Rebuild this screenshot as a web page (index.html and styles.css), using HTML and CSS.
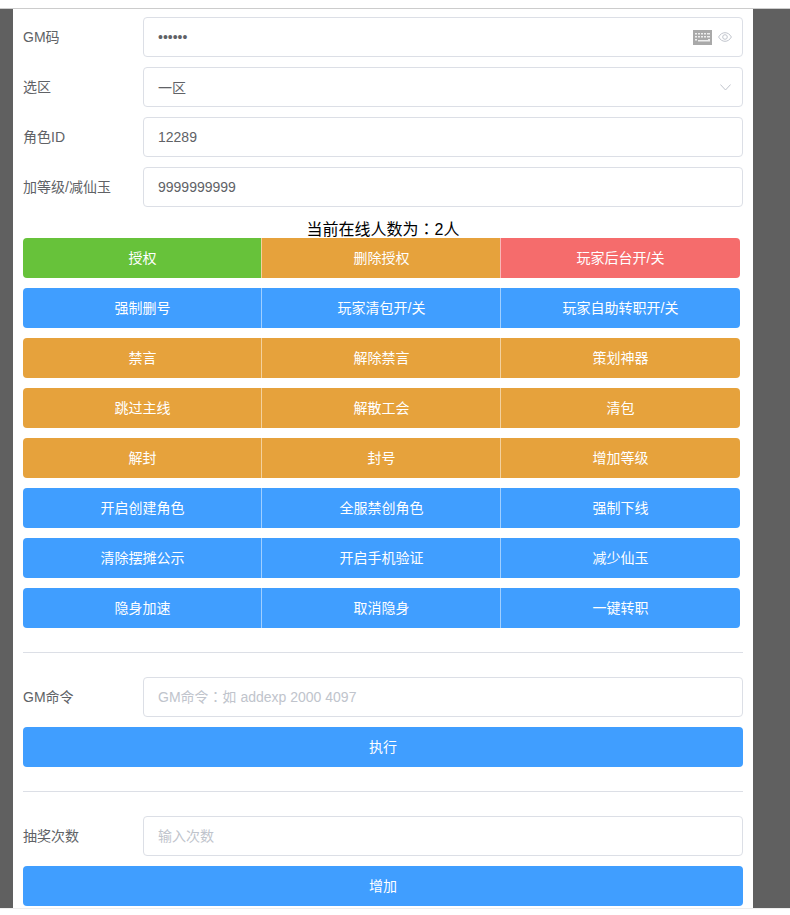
FILE: index.html
```html
<!DOCTYPE html>
<html lang="zh-CN">
<head>
<meta charset="utf-8">
<title>GM</title>
<link rel="stylesheet" href="styles.css">
</head>
<body>
<div class="topbar"></div>
<div class="backdrop">
  <main class="panel">
    <div class="row">
      <label class="label">GM码</label>
      <div class="field">
        <input class="input" type="password" value="123456">
        <span class="suffix">
          <svg class="kbd" width="19" height="15" viewBox="0 0 19 15"><rect width="19" height="15" fill="#a9a9a9"/><g fill="#eee"><rect x="2" y="3" width="2" height="1.5"/><rect x="5" y="3" width="2" height="1.5"/><rect x="8" y="3" width="2" height="1.5"/><rect x="11" y="3" width="2" height="1.5"/><rect x="14" y="3" width="3" height="1.5"/><rect x="2" y="6" width="2" height="1.5"/><rect x="5" y="6" width="2" height="1.5"/><rect x="8" y="6" width="2" height="1.5"/><rect x="11" y="6" width="2" height="1.5"/><rect x="14" y="6" width="3" height="1.5"/><rect x="2" y="9" width="2" height="1.5"/><rect x="5" y="10" width="10" height="1.5"/><rect x="15" y="9" width="2" height="2.5"/></g></svg>
          <svg width="14" height="10" viewBox="0 0 14 10" fill="none" stroke="#c0c4cc"><path d="M.6 5C2.2 2.2 4.4.7 7 .7s4.800 1.500 6.400 4.300C11.800 7.800 9.600 9.300 7 9.300S2.200 7.800.6 5z"/><circle cx="7" cy="5" r="2.300"/></svg>
        </span>
      </div>
    </div>
    <div class="row">
      <label class="label">选区</label>
      <div class="field">
        <input class="input" type="text" value="一区" readonly>
        <span class="suffix suffix-select">
          <svg width="11" height="7" viewBox="0 0 11 7" fill="none" stroke="#c0c4cc"><path d="M.4.500 5.500 6 10.600.500"/></svg>
        </span>
      </div>
    </div>
    <div class="row">
      <label class="label">角色ID</label>
      <div class="field"><input class="input" type="text" value="12289"></div>
    </div>
    <div class="row">
      <label class="label">加等级/减仙玉</label>
      <div class="field"><input class="input" type="text" value="9999999999"></div>
    </div>

    <div class="status">当前在线人数为<span class="colon" lang="zh-TW">：</span>2人</div>

    <div class="group"><button class="btn green">授权</button><button class="btn orange">删除授权</button><button class="btn red">玩家后台开/关</button></div>
    <div class="group"><button class="btn blue">强制删号</button><button class="btn blue">玩家清包开/关</button><button class="btn blue">玩家自助转职开/关</button></div>
    <div class="group"><button class="btn orange">禁言</button><button class="btn orange">解除禁言</button><button class="btn orange">策划神器</button></div>
    <div class="group"><button class="btn orange">跳过主线</button><button class="btn orange">解散工会</button><button class="btn orange">清包</button></div>
    <div class="group"><button class="btn orange">解封</button><button class="btn orange">封号</button><button class="btn orange">增加等级</button></div>
    <div class="group"><button class="btn blue">开启创建角色</button><button class="btn blue">全服禁创角色</button><button class="btn blue">强制下线</button></div>
    <div class="group"><button class="btn blue">清除摆摊公示</button><button class="btn blue">开启手机验证</button><button class="btn blue">减少仙玉</button></div>
    <div class="group"><button class="btn blue">隐身加速</button><button class="btn blue">取消隐身</button><button class="btn blue">一键转职</button></div>

    <hr class="divider">

    <div class="row">
      <label class="label">GM命令</label>
      <div class="field"><input class="input input-tc" lang="zh-TW" type="text" placeholder="GM命令：如 addexp 2000 4097"></div>
    </div>
    <button class="wide">执行</button>

    <hr class="divider">

    <div class="row">
      <label class="label">抽奖次数</label>
      <div class="field"><input class="input" type="text" placeholder="输入次数"></div>
    </div>
    <button class="wide">增加</button>
  </main>
</div>
</body>
</html>
```

FILE: styles.css
```css
* { box-sizing: border-box; }

html, body {
  margin: 0;
  height: 915px;
  overflow: hidden;
  background: #fff;
}

body {
  font-family: "Liberation Sans", "Noto Sans CJK SC", sans-serif;
  font-size: 14px;
  color: #606266;
}

.topbar {
  height: 9px;
  border-bottom: 1px solid #ccc;
}

.backdrop {
  height: 900px;
  padding: 0 37px 0 13px;
  border-bottom: 1px solid #eee;
  background: #606060;
  overflow: hidden;
}

.panel {
  height: 100%;
  padding: 8px 10px 0;
  background: #fff;
}

.row {
  display: flex;
  align-items: center;
  height: 40px;
  margin-bottom: 10px;
}

.label {
  flex: 0 0 120px;
  line-height: 40px;
}

.field {
  flex: 1;
  position: relative;
  height: 40px;
}

.input {
  display: block;
  width: 100%;
  height: 40px;
  padding: 0 14px;
  border: 1px solid #dcdfe6;
  border-radius: 4px;
  outline: 0;
  background: #fff;
  color: #606266;
  font: inherit;
}

.input::placeholder {
  color: #c0c4cc;
}

.input-tc::placeholder {
  font-family: "Liberation Sans", "Noto Sans CJK TC", sans-serif;
}

.suffix {
  position: absolute;
  top: 0;
  right: 11px;
  height: 40px;
  display: flex;
  align-items: center;
  gap: 6px;
}

.suffix-select {
  right: 12px;
}

.kbd {
  display: block;
}

.status {
  height: 21px;
  line-height: 22px;
  text-align: center;
  font-size: 16px;
  color: #000;
}

.colon {
  font-family: "Noto Sans CJK TC", sans-serif;
}

.group {
  display: flex;
  width: 717px;
  height: 40px;
  margin-bottom: 10px;
}

.btn {
  flex: 0 0 240px;
  height: 40px;
  margin-left: -1px;
  padding: 0 0 2px;
  border: 0;
  border-left: 1px solid rgba(255, 255, 255, .5);
  color: #fff;
  font: inherit;
  cursor: pointer;
}

.btn:first-child {
  flex-basis: 239px;
  margin-left: 0;
  border-left: 0;
  border-radius: 4px 0 0 4px;
}

.btn:last-child {
  border-radius: 0 4px 4px 0;
}

.green { background: #67c23a; }
.orange { background: #e6a23c; }
.red { background: #f56c6c; }
.blue { background: #409eff; }

.divider {
  height: 1px;
  margin: 24px 0;
  border: 0;
  background: #dcdfe6;
}

.wide {
  display: block;
  width: 100%;
  height: 40px;
  padding: 0 0 2px;
  border: 0;
  border-radius: 4px;
  background: #409eff;
  color: #fff;
  font: inherit;
  cursor: pointer;
}
```
